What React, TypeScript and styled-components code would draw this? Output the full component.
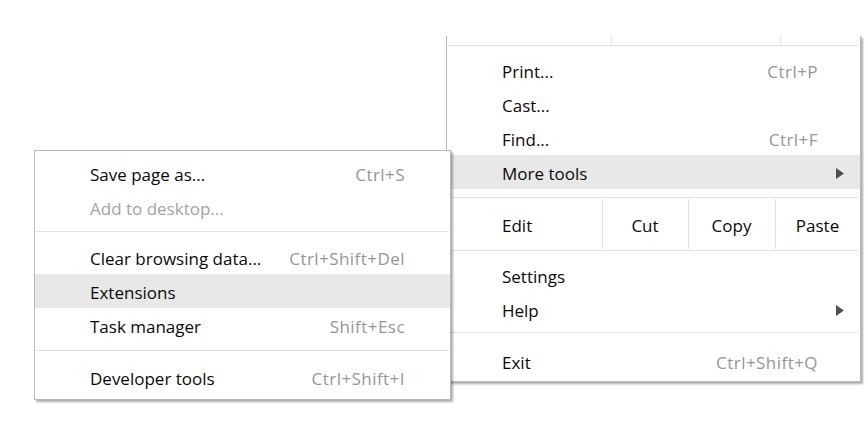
import React from "react";
import styled, { createGlobalStyle } from "styled-components";

const GlobalStyle = createGlobalStyle`
  html, body {
    margin: 0;
    padding: 0;
    background: #fff;
  }
  body {
    font-family: "Open Sans", "Noto Sans", sans-serif;
  }
`;

const Desktop = styled.div`
  position: relative;
  width: 868px;
  height: 437px;
  overflow: hidden;
  background: #fff;
`;

const MenuBox = styled.div<{ $left: number; $top: number; $width: number; $noTop?: boolean }>`
  position: absolute;
  left: ${(p) => p.$left}px;
  top: ${(p) => p.$top}px;
  width: ${(p) => p.$width}px;
  box-sizing: border-box;
  background: #fff;
  border: 1px solid #b9b9b9;
  ${(p) => (p.$noTop ? "border-top: none;" : "")}
  box-shadow: 2px 2px 2px rgba(0, 0, 0, 0.32);
  display: flex;
  flex-direction: column;
`;

const Group = styled.div<{ $top: number; $bottom: number }>`
  display: flex;
  flex-direction: column;
  padding: ${(p) => p.$top}px 0 ${(p) => p.$bottom}px;
`;

const Separator = styled.div`
  height: 1px;
  margin: 0 1px;
  background: #e3e3e3;
`;

const Row = styled.div<{ $active?: boolean }>`
  display: flex;
  align-items: center;
  height: 34px;
  box-sizing: border-box;
  padding: 2px 16px 0 55px;
  background: ${(p) => (p.$active ? "#e8e8e8" : "transparent")};
  font-size: 17px;
`;

const Label = styled.span<{ $disabled?: boolean }>`
  flex: 1;
  color: ${(p) => (p.$disabled ? "#a3a3a3" : "#0a0a0a")};
  white-space: nowrap;
`;

const Shortcut = styled.span`
  color: #969696;
  letter-spacing: 0.45px;
  white-space: nowrap;
`;

const Trail = styled.span<{ $width: number }>`
  width: ${(p) => p.$width}px;
  display: flex;
  justify-content: flex-end;
  align-items: center;
`;

const ZoomStub = styled.div`
  display: flex;
  height: 9px;
`;

const StubCell = styled.div<{ $width?: number }>`
  width: ${(p) => (p.$width ? `${p.$width}px` : "auto")};
  flex: ${(p) => (p.$width ? "none" : 1)};
  height: 8px;
  border-right: ${(p) => (p.$width ? "1px solid #e0e0e0" : "none")};
`;

const EditRow = styled.div`
  display: flex;
  align-items: stretch;
  height: 52px;
  font-size: 17px;
  color: #0a0a0a;
`;

const EditLabel = styled.div`
  width: 155px;
  padding: 2px 0 0 55px;
  box-sizing: border-box;
  display: flex;
  align-items: center;
`;

const EditButton = styled.div<{ $width: number }>`
  width: ${(p) => p.$width}px;
  padding-top: 2px;
  box-sizing: border-box;
  display: flex;
  align-items: center;
  justify-content: center;
  position: relative;
  &::before {
    content: "";
    position: absolute;
    left: 0;
    top: 1px;
    bottom: 1px;
    width: 1px;
    background: #e0e0e0;
  }
`;

const Arrow = () => (
  <svg width="8" height="11" viewBox="0 0 8 11">
    <path d="M0 0 L8 5.5 L0 11 Z" fill="#4f4f4f" />
  </svg>
);

type Item = {
  label: string;
  shortcut?: string;
  sub?: boolean;
  active?: boolean;
  disabled?: boolean;
};

const MenuRow = ({ item, trail = 26 }: { item: Item; trail?: number }) => (
  <Row $active={item.active}>
    <Label $disabled={item.disabled}>{item.label}</Label>
    {item.shortcut && <Shortcut>{item.shortcut}</Shortcut>}
    <Trail $width={trail}>{item.sub && <Arrow />}</Trail>
  </Row>
);

const mainTop: Item[] = [
  { label: "Print...", shortcut: "Ctrl+P" },
  { label: "Cast..." },
  { label: "Find...", shortcut: "Ctrl+F" },
  { label: "More tools", sub: true, active: true },
];

const mainMid: Item[] = [{ label: "Settings" }, { label: "Help", sub: true }];

const subA: Item[] = [
  { label: "Save page as...", shortcut: "Ctrl+S" },
  { label: "Add to desktop...", disabled: true },
];

const subB: Item[] = [
  { label: "Clear browsing data...", shortcut: "Ctrl+Shift+Del" },
  { label: "Extensions", active: true },
  { label: "Task manager", shortcut: "Shift+Esc" },
];

const App = () => (
  <>
    <GlobalStyle />
    <Desktop>
      <MenuBox $left={446} $top={36} $width={415} $noTop>
        <ZoomStub>
          <StubCell $width={164} />
          <StubCell $width={168} />
          <StubCell />
        </ZoomStub>
        <Separator />
        <Group $top={7} $bottom={8}>
          {mainTop.map((it) => (
            <MenuRow key={it.label} item={it} />
          ))}
        </Group>
        <Separator />
        <EditRow>
          <EditLabel>Edit</EditLabel>
          <EditButton $width={86}>Cut</EditButton>
          <EditButton $width={87}>Copy</EditButton>
          <EditButton $width={85}>Paste</EditButton>
        </EditRow>
        <Separator />
        <Group $top={7} $bottom={6}>
          {mainMid.map((it) => (
            <MenuRow key={it.label} item={it} />
          ))}
        </Group>
        <Separator />
        <Group $top={11} $bottom={3}>
          <MenuRow item={{ label: "Exit", shortcut: "Ctrl+Shift+Q" }} />
        </Group>
      </MenuBox>

      <MenuBox $left={34} $top={150} $width={417}>
        <Group $top={5} $bottom={7}>
          {subA.map((it) => (
            <MenuRow key={it.label} item={it} trail={29} />
          ))}
        </Group>
        <Separator />
        <Group $top={8} $bottom={8}>
          {subB.map((it) => (
            <MenuRow key={it.label} item={it} trail={29} />
          ))}
        </Group>
        <Separator />
        <Group $top={9} $bottom={5}>
          <MenuRow item={{ label: "Developer tools", shortcut: "Ctrl+Shift+I" }} trail={29} />
        </Group>
      </MenuBox>
    </Desktop>
  </>
);

export default App;
